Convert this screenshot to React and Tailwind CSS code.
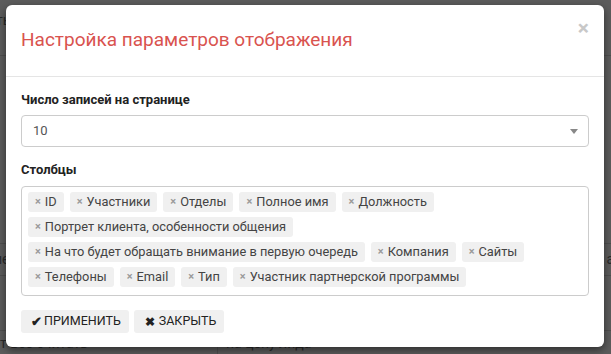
import React from "react";

const columns = [
  "ID",
  "Участники",
  "Отделы",
  "Полное имя",
  "Должность",
  "Портрет клиента, особенности общения",
  "На что будет обращать внимание в первую очередь",
  "Компания",
  "Сайты",
  "Телефоны",
  "Email",
  "Тип",
  "Участник партнерской программы",
];

function Tag({ label }) {
  return (
    <span className="flex h-[20px] items-center rounded-[3px] bg-[#f0f0f0] px-[7px] text-[12.8px] text-[#444]">
      <span className="mr-[4px] text-[11px] font-bold text-[#9a9a9a]">×</span>
      {label}
    </span>
  );
}

export default function App() {
  return (
    <div
      className="relative h-[354px] w-[611px] overflow-hidden bg-[#5c5c5c] text-[13px]"
      style={{ fontFamily: "Roboto, 'Liberation Sans', sans-serif" }}
    >
      {/* page behind the overlay */}
      <div className="flex h-full flex-col text-[#2a2a2a]">
        <div className="flex h-[57px] items-end border-b border-[#4f4f4f] pb-[24px] text-[14px]">
          <span className="-ml-[4px]">ты</span>
        </div>
        <div className="h-[193px] border-b border-[#4f4f4f]" />
        <div className="flex h-[33px] items-center justify-between border-b border-[#4f4f4f] text-[14px]">
          <span className="-ml-[6px]">ие</span>
          <span className="-mr-[3px]">а</span>
        </div>
        <div className="h-[57px] border-b border-[#4f4f4f]" />
        <div className="flex text-[14px]">
          <span className="mt-[2px] w-[218px] border-r border-[#4f4f4f]">т все считать</span>
          <span className="mt-[2px] pl-[8px]">на цену лида</span>
        </div>
      </div>

      {/* modal */}
      <div className="absolute left-[6px] top-[5px] flex h-[342px] w-[598px] flex-col rounded-[6px] bg-white shadow-[0_3px_9px_rgba(0,0,0,0.5)]">
        <div className="flex h-[72px] items-center justify-between border-b border-[#e5e5e5] px-[15px]">
          <h4 className="text-[19px] font-normal text-[#d9534f]">
            Настройка параметров отображения
          </h4>
          <span className="-mt-[24px] text-[21px] font-bold leading-none text-[#c8c8c8]">×</span>
        </div>

        <div className="flex flex-col px-[15px] pt-[14px]">
          <label className="text-[13px] font-bold leading-[18px] text-[#222]">
            Число записей на странице
          </label>
          <div className="mt-[6px] flex h-[32px] items-center justify-between rounded-[4px] border border-[#cccccc] pl-[11px] pr-[10px] text-[13px] text-[#555]">
            <span>10</span>
            <span className="h-0 w-0 border-x-[4px] border-t-[5px] border-x-transparent border-t-[#888]" />
          </div>

          <label className="mt-[14px] text-[13px] font-bold leading-[18px] text-[#222]">
            Столбцы
          </label>
          <div className="mt-[7px] flex flex-wrap gap-x-[6px] gap-y-[5px] rounded-[4px] border border-[#cccccc] px-[6px] pb-[8px] pt-[5px]">
            {columns.map((c) => (
              <Tag key={c} label={c} />
            ))}
          </div>

          <div className="mt-[14px] flex gap-[5px]">
            <button className="flex h-[23px] items-center gap-[2px] rounded-[3px] bg-[#f0f0f0] pl-[10px] pr-[8px] text-[12.5px] text-[#222]">
              <span className="text-[13px] font-bold">✔</span>
              ПРИМЕНИТЬ
            </button>
            <button className="flex h-[23px] items-center gap-[4px] rounded-[3px] bg-[#f0f0f0] pl-[11px] pr-[8px] text-[12.5px] text-[#222]">
              <span className="text-[12px] font-bold">✖</span>
              ЗАКРЫТЬ
            </button>
          </div>
        </div>
      </div>
    </div>
  );
}
